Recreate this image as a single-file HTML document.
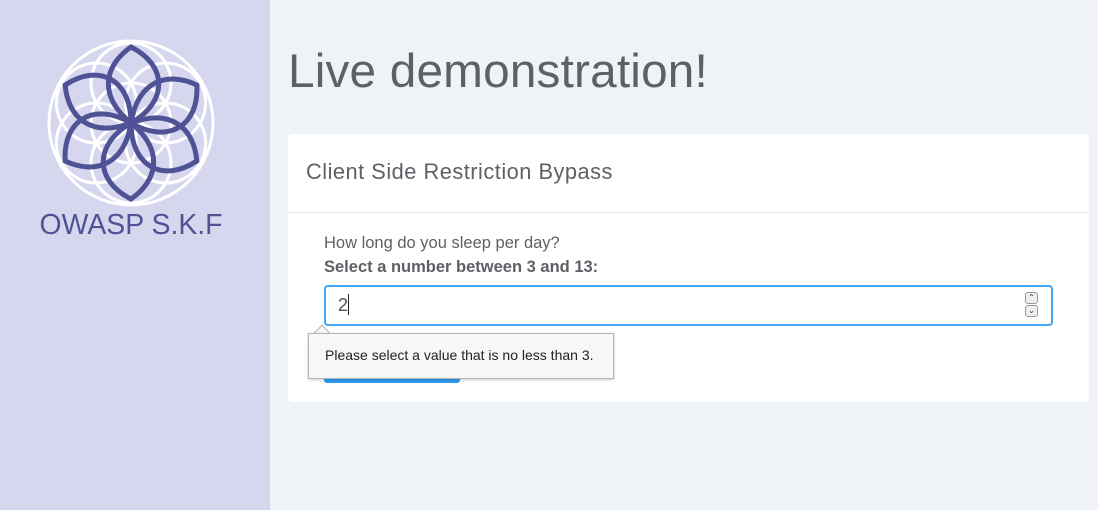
<!DOCTYPE html>
<html><head><style>
*{margin:0;padding:0;box-sizing:border-box}
body{width:1098px;height:510px;overflow:hidden;background:#eff2f6;font-family:"Liberation Sans",sans-serif;position:relative}
.side{position:absolute;left:0;top:0;width:270px;height:510px;background:#d6d7ee}
.brand{position:absolute;left:0;width:262px;top:209px;text-align:center;font-size:28.4px;color:#4f5396}
h1{position:absolute;left:288px;top:44px;font-size:47.7px;font-weight:normal;color:#5d6165;letter-spacing:0.2px}
.card{position:absolute;left:288px;top:134px;width:801px;height:268px;background:#fff;border-radius:4px}
.card .hd{height:79px;border-bottom:1px solid #e8eaed;padding:25px 18px;font-size:21.8px;color:#5d6165;letter-spacing:0.5px}
.q{position:absolute;left:36px;top:100px;font-size:16.5px;color:#5d6165}
.b{position:absolute;left:36px;top:124px;font-size:16.5px;font-weight:bold;color:#5d6165}
.inp{position:absolute;left:36px;top:151px;width:729px;height:41px;border:2px solid #42a5f5;border-radius:4px;font-size:18px;color:#555;padding:7px 12px}
.cur{display:inline-block;width:1px;height:21px;background:#222;vertical-align:-4px}
.sp{position:absolute;right:13px;width:13px;height:12px;border:1px solid #999;border-radius:3px;background:#eee;font-size:8px;text-align:center;line-height:10px;color:#333}
.btn{position:absolute;left:36px;top:230px;width:136px;height:19px;background:#2e9cf0;border-radius:3px}
.tip{position:absolute;left:308px;top:333px;width:306px;height:46px;background:#f7f7f7;border:1px solid #b5b5b5;box-shadow:0 1px 3px rgba(0,0,0,.2);font-family:"Liberation Sans",sans-serif;font-size:14px;color:#222;padding:13px 16px;white-space:nowrap}
.arr{position:absolute;left:316px;top:327px;width:12px;height:12px;background:#f7f7f7;border-left:1px solid #b5b5b5;border-top:1px solid #b5b5b5;transform:rotate(45deg)}
</style></head><body>
<div class="side">
<svg width="270" height="210" style="position:absolute;left:0;top:0">
<g fill="none" stroke="#fff" stroke-width="3">
<circle cx="131" cy="123" r="82"/>
<circle cx="131" cy="123" r="40"/>
<circle cx="131" cy="83" r="40"/><circle cx="131" cy="163" r="40"/>
<circle cx="96.4" cy="103" r="40"/><circle cx="165.6" cy="103" r="40"/>
<circle cx="96.4" cy="143" r="40"/><circle cx="165.6" cy="143" r="40"/>
</g>
<g fill="none" stroke="#4f5396" stroke-width="5" transform="translate(131,123)">
<path id="p" d="M0 0 C38 -22 36 -58 0 -76 C-26 -58 -34 -28 0 0Z"/>
<use href="#p" transform="rotate(60)"/><use href="#p" transform="rotate(120)"/>
<use href="#p" transform="rotate(180)"/><use href="#p" transform="rotate(240)"/>
<use href="#p" transform="rotate(300)"/>
</g>
</svg>
<div class="brand">OWASP S.K.F</div>
</div>
<h1>Live demonstration!</h1>
<div class="card">
<div class="hd">Client Side Restriction Bypass</div>
<div class="q">How long do you sleep per day?</div>
<div class="b">Select a number between 3 and 13:</div>
<div class="inp">2<span class="cur"></span>
<div class="sp" style="top:5px">&#8963;</div><div class="sp" style="top:18px">&#8964;</div></div>
<div class="btn"></div>
</div>
<div class="arr"></div>
<div class="tip">Please select a value that is no less than 3.</div>
</body></html>
